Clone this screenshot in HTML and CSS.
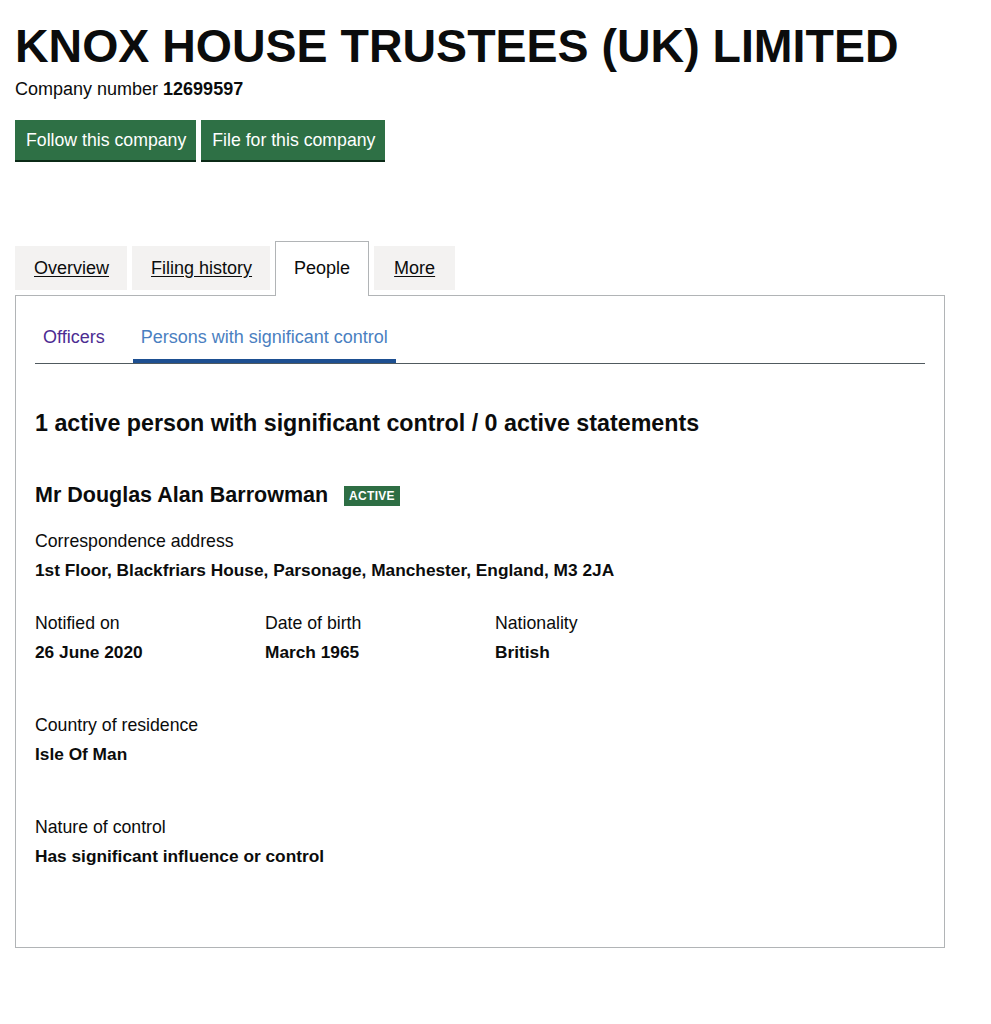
FILE: index.html
```html
<!DOCTYPE html>
<html lang="en">
<head>
<meta charset="utf-8">
<title>KNOX HOUSE TRUSTEES (UK) LIMITED - People</title>
<link rel="stylesheet" href="styles.css">
</head>
<body>
<main class="page">
  <h1 class="company-name">KNOX HOUSE TRUSTEES (UK) LIMITED</h1>
  <p class="company-number">Company number <strong>12699597</strong></p>
  <div class="actions">
    <a class="button" href="#">Follow this company</a>
    <a class="button" href="#">File for this company</a>
  </div>

  <ul class="tabs">
    <li class="tab"><a href="#">Overview</a></li>
    <li class="tab"><a href="#">Filing history</a></li>
    <li class="tab tab-selected"><span>People</span></li>
    <li class="tab tab-last"><a href="#">More</a></li>
  </ul>

  <section class="panel">
    <ul class="subnav">
      <li class="subnav-item"><a class="visited" href="#">Officers</a></li>
      <li class="subnav-item subnav-active"><a href="#">Persons with significant control</a></li>
    </ul>

    <h2 class="summary">1 active person with significant control / 0 active statements</h2>

    <div class="psc">
      <h3 class="psc-name">Mr Douglas Alan Barrowman <span class="badge">Active</span></h3>

      <dl class="field field-first">
        <dt>Correspondence address</dt>
        <dd>1st Floor, Blackfriars House, Parsonage, Manchester, England, M3 2JA</dd>
      </dl>

      <div class="field-row">
        <dl class="field">
          <dt>Notified on</dt>
          <dd>26 June 2020</dd>
        </dl>
        <dl class="field">
          <dt>Date of birth</dt>
          <dd>March 1965</dd>
        </dl>
        <dl class="field">
          <dt>Nationality</dt>
          <dd>British</dd>
        </dl>
      </div>

      <dl class="field field-spaced">
        <dt>Country of residence</dt>
        <dd>Isle Of Man</dd>
      </dl>

      <dl class="field field-spaced">
        <dt>Nature of control</dt>
        <dd>Has significant influence or control</dd>
      </dl>
    </div>
  </section>
</main>
</body>
</html>
```

FILE: styles.css
```css
* { box-sizing: border-box; }

html, body {
  margin: 0;
  padding: 0;
  background: #ffffff;
}

body {
  font-family: "Liberation Sans", Arial, sans-serif;
  color: #0b0c0c;
}

.page {
  padding: 22px 46px 0 15px;
  width: 991px;
}

.company-name {
  margin: 0;
  font-family: "Liberation Sans", Arial, sans-serif;
  font-weight: 700;
  font-size: 46.5px;
  line-height: 48px;
  color: #0b0c0c;
}

.company-number {
  margin: 8px 0 0;
  font-size: 18px;
  line-height: 22px;
}

.company-number strong { font-weight: 700; }

.actions {
  display: flex;
  gap: 5px;
  margin-top: 20px;
}

.button {
  display: flex;
  align-items: center;
  height: 42px;
  padding: 0 10px 2px 11px;
  background: #2e7045;
  color: #ffffff;
  font-size: 17.7px;
  line-height: 22px;
  text-decoration: none;
  box-shadow: inset 0 -2px 0 #0b2a17;
}

.tabs {
  list-style: none;
  margin: 79px 0 0;
  padding: 0;
  display: flex;
  align-items: flex-end;
  gap: 5px;
}

.tab {
  height: 44px;
  margin-bottom: 5px;
  background: #f3f2f1;
  display: flex;
  align-items: center;
  padding: 0 18px 0 19px;
  font-size: 18px;
  line-height: 22px;
}

.tab-last { padding: 0 20px; }

.tab a {
  color: #0b0c0c;
  text-decoration: underline;
  text-underline-offset: 2px;
}

.tab-selected {
  height: 55px;
  margin-bottom: -1px;
  background: #ffffff;
  border: 1px solid #b1b4b6;
  border-bottom: 0;
  padding: 0 18px 2px;
  position: relative;
  z-index: 1;
}

.tab-selected span { color: #0b0c0c; }

.panel {
  width: 930px;
  border: 1px solid #b1b4b6;
  padding: 0 19px 79px;
}

.subnav {
  list-style: none;
  margin: 29px 0 0;
  padding: 0;
  display: flex;
  gap: 20px;
  border-bottom: 1px solid #505a5f;
}

.subnav-item {
  padding: 0 8px 10px;
  font-size: 18px;
  line-height: 24px;
  border-bottom: 4px solid transparent;
}

.subnav-item a { text-decoration: none; color: #4c2c92; }

.subnav-active { border-bottom-color: #1d4f91; }
.subnav-active a { color: #4a7fc1; }

.summary {
  margin: 44px 0 0;
  font-size: 23.25px;
  line-height: 30px;
  font-weight: 700;
}

.psc { margin-top: 42px; }

.psc-name {
  margin: 0;
  font-size: 21.5px;
  line-height: 30px;
  font-weight: 700;
  display: flex;
  align-items: center;
  gap: 16px;
}

.badge {
  background: #2e6e44;
  color: #ffffff;
  font-size: 12px;
  line-height: 14px;
  text-transform: uppercase;
  font-weight: 700;
  padding: 3px 5px;
  letter-spacing: 0.3px;
  margin-top: 2px;
}

.field { margin: 0; }

.field dt {
  font-size: 17.7px;
  line-height: 24px;
}

.field dd {
  margin: 5px 0 0;
  font-size: 17.3px;
  line-height: 24px;
  font-weight: 700;
}

.field-first { margin-top: 19px; }

.field-row {
  display: grid;
  grid-template-columns: 230px 230px 230px;
  margin-top: 29px;
}

.field-spaced { margin-top: 49px; }
```
